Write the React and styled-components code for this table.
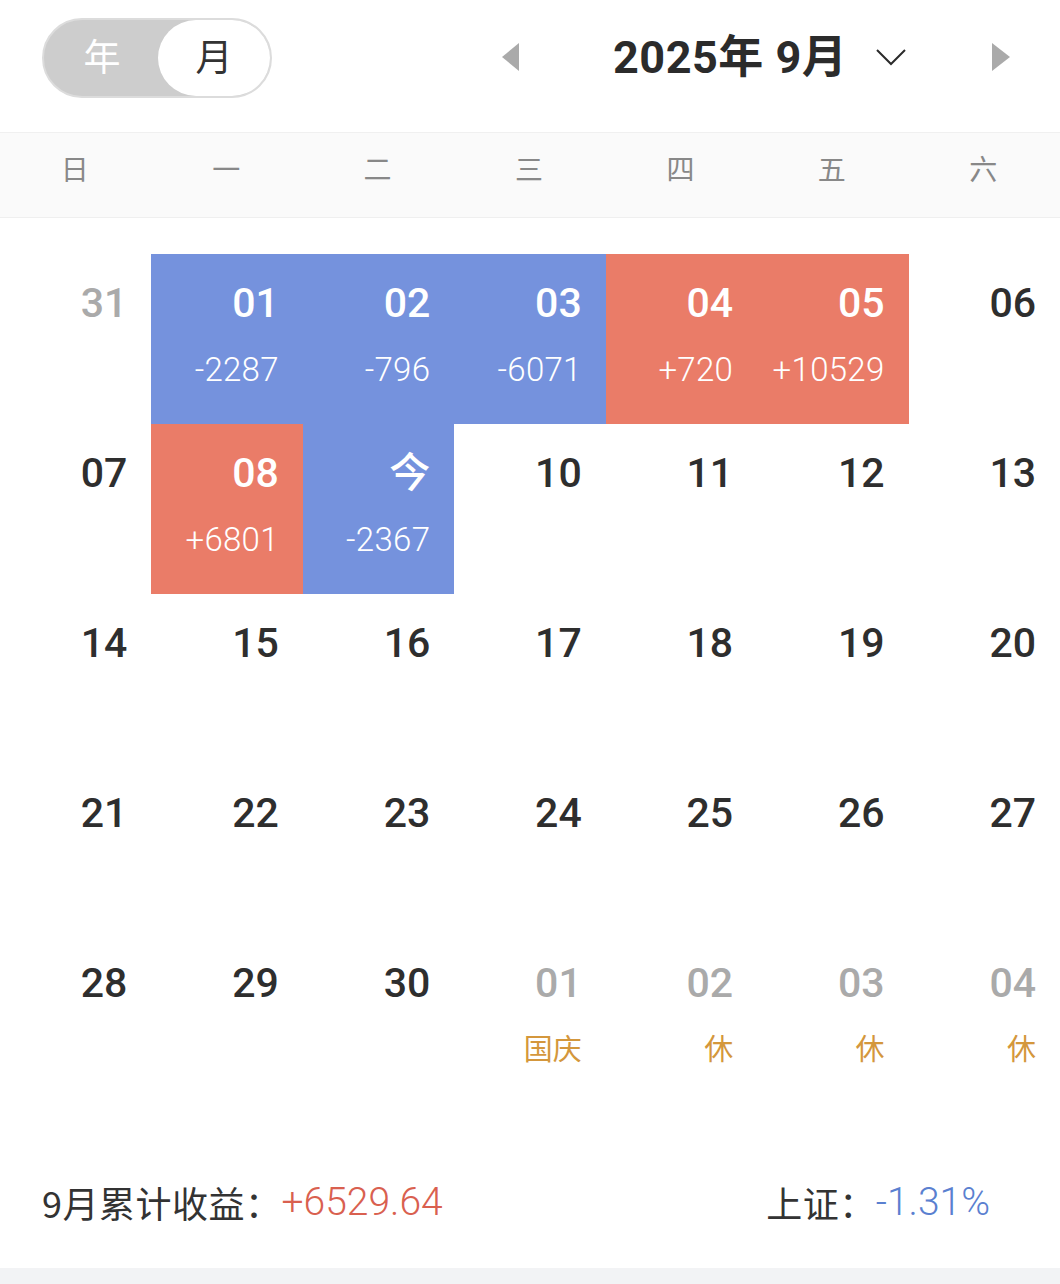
import React from 'react'
import styled, { createGlobalStyle } from 'styled-components'

const GlobalStyle = createGlobalStyle`
  body {
    margin: 0;
    background: #fff;
    font-family: Roboto, "Noto Sans CJK SC", sans-serif;
  }
`;

const Page = styled.div`
  width: 1060px;
  min-height: 1284px;
  display: flex;
  flex-direction: column;
  background: #fff;
`;

const Header = styled.div`
  height: 132px;
  box-sizing: border-box;
  padding: 18px 0 0 42px;
  display: flex;
  align-items: flex-start;
`;

const Toggle = styled.div`
  width: 230px;
  height: 80px;
  box-sizing: border-box;
  border: 2px solid #dcdcdc;
  border-radius: 40px;
  background: #cdcdcd;
  display: flex;
  align-items: center;
  justify-content: space-between;
  font-family: "Noto Sans CJK SC", sans-serif;
  font-size: 37px;
`;

const ToggleOpt = styled.div`
  width: ${p => (p.active ? '112px' : '110px')};
  height: 76px;
  box-sizing: border-box;
  border-radius: 38px;
  display: flex;
  align-items: center;
  justify-content: center;
  background: ${p => (p.active ? '#fff' : 'transparent')};
  color: ${p => (p.active ? '#333' : '#fff')};
  padding: ${p => (p.active ? '0 0 6px 0' : '0 0 6px 6px')};
  line-height: 1;
`;

const Nav = styled.div`
  margin-left: 230px;
  height: 78px;
  display: flex;
  align-items: center;
`;

const Arrow = styled.div`
  width: 0;
  height: 0;
  border-top: 14px solid transparent;
  border-bottom: 14px solid transparent;
  ${p => (p.dir === 'left'
    ? 'border-right: 17px solid #aaa;'
    : 'border-left: 18px solid #aaa;')}
`;

const Title = styled.div`
  margin-left: 94px;
  font-family: Roboto, "Noto Sans CJK SC", sans-serif;
  font-weight: 700;
  font-size: 45px;
  color: #2b2b2b;
  letter-spacing: 0.5px;
  white-space: nowrap;
  line-height: 1;
`;

const Chevron = styled.svg`
  margin-left: 28px;
  margin-right: 85px;
  width: 32px;
  height: 20px;
`;

const WeekBar = styled.div`
  height: 86px;
  box-sizing: border-box;
  background: #fafafa;
  border-top: 1px solid #f0f0f0;
  border-bottom: 1px solid #efefef;
  display: grid;
  grid-template-columns: repeat(7, 1fr);
  align-items: center;
`;

const WeekDay = styled.div`
  text-align: center;
  font-family: "Noto Sans CJK SC", sans-serif;
  font-size: 28px;
  line-height: 1;
  color: #888;
  padding: 0 2px 14px 0;
`;

const Grid = styled.div`
  padding-top: 36px;
  display: grid;
  grid-template-columns: repeat(7, 1fr);
  grid-auto-rows: 170px;
`;

const toneBg = { down: '#7592dd', up: '#ea7c68' };

const Cell = styled.div`
  box-sizing: border-box;
  padding: 25px 24px 0 0;
  text-align: right;
  background: ${p => toneBg[p.tone] || 'transparent'};
`;

const DayNum = styled.div`
  font-family: Roboto, "Noto Sans CJK SC", sans-serif;
  font-weight: 500;
  font-size: 41px;
  line-height: 48px;
  color: ${p => (p.tone ? '#fff' : p.muted ? '#aaa' : '#2e2e2e')};
`;

const Value = styled.div`
  margin-top: 21px;
  font-family: Roboto, sans-serif;
  font-weight: 300;
  font-size: 33px;
  line-height: 44px;
  color: #fff;
  letter-spacing: 0.3px;
`;

const Tag = styled.div`
  margin-top: 18px;
  font-family: "Noto Sans CJK SC", sans-serif;
  font-size: 29px;
  line-height: 44px;
  color: #d4973c;
`;

const Footer = styled.div`
  height: 164px;
  box-sizing: border-box;
  padding: 76px 70px 0 42px;
  display: flex;
  justify-content: space-between;
  align-items: flex-start;
`;

const Stat = styled.div`
  display: flex;
  align-items: center;
  height: 44px;
  font-family: "Noto Sans CJK SC", sans-serif;
  font-size: 36px;
  letter-spacing: 0.5px;
  color: #333;
`;

const StatVal = styled.span`
  font-family: Roboto, sans-serif;
  font-weight: 300;
  font-size: 39px;
  letter-spacing: 0;
  color: ${p => (p.up ? '#d9604f' : '#5a80d0')};
`;

const BottomStrip = styled.div`
  height: 16px;
  background: #f2f3f5;
`;

const weekDays = ['日', '一', '二', '三', '四', '五', '六'];

const days = [
  { d: '31', muted: true },
  { d: '01', v: '-2287', tone: 'down' },
  { d: '02', v: '-796', tone: 'down' },
  { d: '03', v: '-6071', tone: 'down' },
  { d: '04', v: '+720', tone: 'up' },
  { d: '05', v: '+10529', tone: 'up' },
  { d: '06' },
  { d: '07' },
  { d: '08', v: '+6801', tone: 'up' },
  { d: '今', v: '-2367', tone: 'down' },
  { d: '10' }, { d: '11' }, { d: '12' }, { d: '13' },
  { d: '14' }, { d: '15' }, { d: '16' }, { d: '17' }, { d: '18' }, { d: '19' }, { d: '20' },
  { d: '21' }, { d: '22' }, { d: '23' }, { d: '24' }, { d: '25' }, { d: '26' }, { d: '27' },
  { d: '28' }, { d: '29' }, { d: '30' },
  { d: '01', muted: true, tag: '国庆' },
  { d: '02', muted: true, tag: '休' },
  { d: '03', muted: true, tag: '休' },
  { d: '04', muted: true, tag: '休' },
];

export default function App() {
  return (
    <Page>
      <GlobalStyle />
      <Header>
        <Toggle>
          <ToggleOpt>年</ToggleOpt>
          <ToggleOpt active>月</ToggleOpt>
        </Toggle>
        <Nav>
          <Arrow dir="left" />
          <Title>2025年 9月</Title>
          <Chevron viewBox="0 0 32 20">
            <polyline points="2,3 16,17 30,3" fill="none" stroke="#2b2b2b" strokeWidth="2" />
          </Chevron>
          <Arrow dir="right" />
        </Nav>
      </Header>

      <WeekBar>
        {weekDays.map(w => <WeekDay key={w}>{w}</WeekDay>)}
      </WeekBar>

      <Grid>
        {days.map((c, i) => (
          <Cell key={i} tone={c.tone}>
            <DayNum tone={c.tone} muted={c.muted}>{c.d}</DayNum>
            {c.v && <Value>{c.v}</Value>}
            {c.tag && <Tag>{c.tag}</Tag>}
          </Cell>
        ))}
      </Grid>

      <Footer>
        <Stat>9月累计收益：<StatVal up>+6529.64</StatVal></Stat>
        <Stat>上证：<StatVal>-1.31%</StatVal></Stat>
      </Footer>
      <BottomStrip />
    </Page>
  );
}
